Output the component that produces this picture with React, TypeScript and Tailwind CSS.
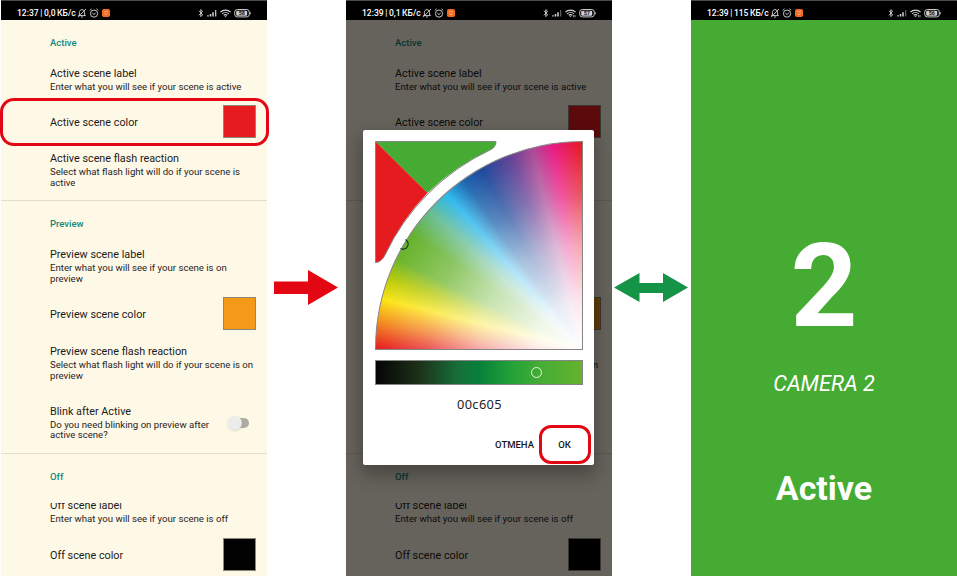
import React from "react";

const MutedBell = () => (
  <svg viewBox="0 0 10 10" className="h-[10px] w-[10px] shrink-0" fill="none" stroke="#dedede" strokeWidth="0.9">
    <path d="M2.4 7.4V4.6C2.4 2.8 3.400 1.8 5 1.6C6.7 1.8 7.6 2.8 7.6 4.6V7.4M1.2 7.6H8.8M4.1 9H5.9M1 9.2L9 1" />
  </svg>
);

const Alarm = () => (
  <svg viewBox="0 0 10 10" className="h-[10px] w-[10px] shrink-0" fill="none" stroke="#dedede" strokeWidth="0.9">
    <circle cx="5" cy="5.6" r="3.6" />
    <path d="M0.8 2.3L2.6 0.8M9.2 2.3L7.4 0.8M3.3 5L5 6.5L6.7 5" />
  </svg>
);

const Signals = ({ level, weak }: { level: string; weak?: boolean }) => (
  <svg viewBox="0 0 54 12" className="h-[12px] w-[54px] shrink-0">
    <path d="M2 3.8L5.6 7.8L3.8 9.6V2.6L5.6 4.3L2 8.3" fill="none" stroke="#d8d8d8" strokeWidth="0.9" />
    <path d="M11 8.2V9.6M13.5 7V9.6M16 5.2V9.6" stroke="#d8d8d8" strokeWidth="1.5" />
    <path d="M18.7 3V9.6" stroke={weak ? "#666" : "#d8d8d8"} strokeWidth="1.2" />
    <path d="M23.4 5.2C26.2 2.4 30.8 2.4 33.6 5.2M25.1 6.9C27 5.1 30 5.1 31.9 6.9M26.7 8.3C27.8 7.4 29.2 7.4 30.3 8.3" fill="none" stroke="#d8d8d8" strokeWidth="1.1" />
    <path d="M27.4 8.9H29.6L28.5 10.1Z" fill="#d8d8d8" />
    {weak && <path d="M31.6 8V10.3M33 8V10.3" stroke="#d8d8d8" strokeWidth="0.7" />}
    <rect x="37.7" y="2.5" width="14.6" height="7.4" rx="2.6" fill="none" stroke="#c8c8c8" strokeWidth="1" />
    <rect x="39.2" y="3.7" width="11" height="5" rx="1.3" fill="#d0d0d0" />
    <path d="M53.3 5.2V7.4" stroke="#c8c8c8" strokeWidth="0.9" />
    <text x="44.8" y="8.1" textAnchor="middle" className="font-[Roboto] text-[5.5px] font-bold" fill="#111">{level}</text>
  </svg>
);

const StatusBar = ({ time, rate, level, weak }: { time: string; rate: string; level: string; weak?: boolean }) => (
  <div className="flex h-5 shrink-0 items-center border-t border-[#4a4a4a] bg-black pr-[16px] pl-4 pt-[4px] text-white">
    <span className="shrink-0 text-[8.5px] leading-[12px] font-medium [word-spacing:-0.5px] whitespace-pre">{time} | {rate}</span>
    <div className="ml-px flex items-center gap-[2.500px]">
      <MutedBell />
      <Alarm />
      <svg viewBox="0 0 8 8" className="h-[8px] w-[8px]">
        <rect width="8" height="8" rx="1.8" fill="#f26a21" />
        <path d="M2 2.7H6M2.2 4.3C3 6 5 6 5.8 4.3" fill="none" stroke="#ffc9a5" strokeWidth="0.7" />
      </svg>
    </div>
    <div className="ml-auto">
      <Signals level={level} weak={weak} />
    </div>
  </div>
);

const Header = ({ children }: { children: string }) => (
  <div className="text-[9.5px] leading-[12px] font-medium text-[#12897b]">{children}</div>
);

const Title = ({ children }: { children: string }) => (
  <div className="h-[14.5px] pt-px text-[10.8px] leading-[14px] whitespace-nowrap">{children}</div>
);

const ColorRow = ({ label, swatch }: { label: string; swatch: string }) => (
  <div className="flex h-[33px] justify-between pr-[11px]">
    <div className="pt-[10px]"><Title>{label}</Title></div>
    <div className={`h-[33px] w-[33px] border border-[#8b8878] ${swatch}`} />
  </div>
);

const subtitle = "text-[9.6px] leading-[11.7px] text-[#26241f] whitespace-nowrap";

const Settings = () => (
  <div className="flex h-[556px] flex-col bg-[#fef8e7] text-[#1c1b18]">
    <section className="h-[181px] shrink-0 border-b border-[#e3ddcd] pl-[49px]">
      <div className="h-[46px] pt-[17px]"><Header>Active</Header></div>
      <div className="h-[39px]">
        <Title>Active scene label</Title>
        <p className={subtitle}>Enter what you will see if your scene is active</p>
      </div>
      <ColorRow label="Active scene color" swatch="bg-[#e61b20]" />
      <div className="pt-[13px]">
        <Title>Active scene flash reaction</Title>
        <p className={subtitle}>Select what flash light will do if your scene is<br />active</p>
      </div>
    </section>
    <section className="h-[253px] shrink-0 border-b border-[#e3ddcd] pl-[49px]">
      <div className="h-[46px] pt-[17px]"><Header>Preview</Header></div>
      <div className="h-[50px]">
        <Title>Preview scene label</Title>
        <p className={subtitle}>Enter what you will see if your scene is on<br />preview</p>
      </div>
      <ColorRow label="Preview scene color" swatch="bg-[#f59a18]" />
      <div className="h-[74px] pt-[14px]">
        <Title>Preview scene flash reaction</Title>
        <p className={subtitle}>Select what flash light will do if your scene is on<br />preview</p>
      </div>
      <div className="flex justify-between pr-[18px]">
        <div>
          <Title>Blink after Active</Title>
          <p className="pt-[1px] text-[9.6px] leading-[10.7px] whitespace-nowrap text-[#26241f]">Do you need blinking on preview after<br />active scene?</p>
        </div>
        <div className="mt-[14px] flex h-[10px] w-[20px] items-center rounded-full bg-[#b0aca0]">
          <div className="-ml-[1px] h-[14px] w-[14px] shrink-0 rounded-full bg-[#ebecec] shadow-sm" />
        </div>
      </div>
    </section>
    <section className="pl-[49px]">
      <div className="h-[49px] pt-[17px]"><Header>Off</Header></div>
      <div className="flex h-[10px] items-end overflow-hidden pb-[1px]"><Title>Off scene label</Title></div>
      <p className={`h-[25px] ${subtitle}`}>Enter what you will see if your scene is off</p>
      <ColorRow label="Off scene color" swatch="bg-[#020202]" />
    </section>
  </div>
);

const Picker = () => (
  <div className="absolute top-[130px] left-[17px] h-[335px] w-[231px] rounded-[2px] bg-white px-[12px] pt-[11px] shadow-[0_8px_18px_2px_rgba(0,0,0,0.3)]">
    <div className="relative h-[209px] w-[208px]">
      <div className="h-full w-full overflow-hidden rounded-tl-[208px] border border-[#858585] bg-[radial-gradient(circle_208px_at_100%_100%,#fff_0%,rgba(255,255,255,0.9)_22%,rgba(255,255,255,0.62)_50%,rgba(255,255,255,0.26)_74%,transparent_98%),conic-gradient(from_270deg_at_100%_100%,#e61c20_0deg,#f28420_7deg,#fce516_14deg,#b9cb08_20deg,#6cb52d_26deg,#65b22e_34deg,#69bd91_42deg,#2cb8ee_49deg,#1e65ad_55deg,#204a9c_61deg,#684295_70deg,#ad4b98_76deg,#ea1a84_82deg,#e61c20_90deg)]" />
      <svg viewBox="0 0 208 209" className="absolute inset-0 h-full w-full">
        <path d="M.5 .5H121C121 4 119 7 116 8.5A221 221 0 0 0 52.5 52Z" fill="#45ab33" />
        <path d="M.5 .5L52.5 52A221 221 0 0 0 10 114C7.500 119 4 121.500 .5 121.500Z" fill="#e61b20" />
        <path d="M.5 .5H121C121 4 119 7 116 8.500A221 221 0 0 0 10 114C7.500 119 4 121.500 .5 121.500Z" fill="none" stroke="#858585" />
        <path d="M30.500 98.500A5 5 0 1 1 25.500 107.500" fill="none" stroke="#13351b" strokeWidth="1.100" />
      </svg>
    </div>
    <div className="mt-[10px] flex h-[25px] w-[208px] items-center border border-[#858585] bg-[linear-gradient(90deg,#040505_0%,#1d2e18_20%,#177039_40%,#068039_50%,#22a038_65%,#45ad35_80%,#65b22e_100%)] pl-[155px]">
      <div className="h-[11px] w-[11px] rounded-full border border-[#e9f5df]" />
    </div>
    <div className="mt-[11px] pl-[2px] text-center font-['Noto_Sans'] text-[12.8px] leading-[16px] tracking-[0.4px] text-[#222]">00c605</div>
    <div className="mt-[13px] mr-[-9px] flex items-center justify-end gap-[5px] text-[9.5px] font-medium text-[#161616]">
      <span className="pt-[2px]">ОТМЕНА</span>
      <div className="flex h-[39px] w-[52px] items-center justify-center rounded-[12px] border-3 border-[#e30613] pt-[1px] pr-[1px]">ОК</div>
    </div>
  </div>
);

export default function App() {
  return (
    <div className="flex h-[576px] w-[957px] overflow-hidden bg-white pl-px font-[Roboto,sans-serif]">
      <div className="relative w-[266px] shrink-0">
        <StatusBar time="12:37" rate="0,0 КБ/с" level="58" />
        <Settings />
        <div className="absolute top-[98px] -left-px h-[48px] w-[269px] rounded-[14px] border-3 border-[#e30613]" />
      </div>
      <svg viewBox="0 0 79 576" className="h-[576px] w-[79px] shrink-0">
        <path d="M7 281.500H41V270L71 287.500L41 305V294H7Z" fill="#e30613" />
      </svg>
      <div className="relative w-[266px] shrink-0">
        <StatusBar time="12:39" rate="0,1 КБ/с" level="57" weak />
        <Settings />
        <div className="absolute inset-x-0 top-5 bottom-0 overflow-hidden bg-black/60" />
        <Picker />
      </div>
      <svg viewBox="0 0 79 576" className="h-[576px] w-[79px] shrink-0">
        <path d="M2 287.500L27.500 273V283H51V273L76 287.500L51 302V293H27.500V302Z" fill="#159447" />
      </svg>
      <div className="flex w-[266px] shrink-0 flex-col bg-[#45ab33] text-white">
        <StatusBar time="12:39" rate="115 КБ/с" level="56" weak />
        <div className="flex flex-col items-center">
          <div className="mt-[206px] text-[117px] leading-[120px] font-bold">2</div>
          <div className="mt-[24px] text-[21.7px] leading-[28px] font-normal italic">CAMERA 2</div>
          <div className="mt-[70px] text-[34px] leading-[40px] font-bold">Active</div>
        </div>
      </div>
    </div>
  );
}
